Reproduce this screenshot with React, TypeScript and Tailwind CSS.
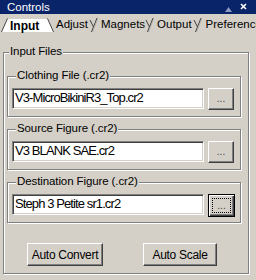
import React from "react";

function GroupBox({
  label,
  labelLeft,
  className,
  children,
}: {
  label: string;
  labelLeft: string;
  className: string;
  children: React.ReactNode;
}) {
  return (
    <div
      className={`relative border border-[#808080] shadow-[inset_1px_1px_0_#fff,1px_1px_0_#fff] ${className}`}
    >
      <span
        className={`absolute -top-[8px] ${labelLeft} bg-[#d4d0c8] px-[1px] text-[11.5px] leading-[13px] tracking-[-0.1px] text-black whitespace-nowrap`}
      >
        {label}
      </span>
      {children}
    </div>
  );
}

function Edit({ value }: { value: string }) {
  return (
    <div className="h-[21px] w-[192px] overflow-hidden whitespace-nowrap border border-t-[#808080] border-l-[#808080] border-b-white border-r-white bg-white pl-[2px] text-[13px] leading-[17px] tracking-[-0.9px] text-black shadow-[inset_1px_1px_0_#404040,inset_-1px_-1px_0_#d4d0c8]">
      {value}
    </div>
  );
}

function BrowseButton({ focused }: { focused?: boolean }) {
  if (focused) {
    return (
      <div className="flex h-[23px] w-[27px] items-center justify-center border border-black bg-[#d4d0c8] shadow-[inset_1px_1px_0_#fff,inset_-1px_-1px_0_#404040,inset_-2px_-2px_0_#808080]">
        <div className="flex h-[15px] w-[19px] items-end justify-center border border-dotted border-black pb-[1px] text-[10px] leading-[10px] text-[#404040]">
          ...
        </div>
      </div>
    );
  }
  return (
    <div className="flex h-[22px] w-[26px] items-end justify-center border border-t-white border-l-white border-b-[#404040] border-r-[#404040] bg-[#d4d0c8] pb-[5px] text-[10px] leading-[10px] text-[#404040] shadow-[inset_-1px_-1px_0_#808080]">
      ...
    </div>
  );
}

function PushButton({ label, width }: { label: string; width: string }) {
  return (
    <div
      className={`flex h-[23px] ${width} items-center justify-center border border-t-white border-l-white border-b-[#404040] border-r-[#404040] bg-[#d4d0c8] text-[12px] tracking-[-0.3px] text-black shadow-[inset_-1px_-1px_0_#808080]`}
    >
      {label}
    </div>
  );
}

function TabSep() {
  return (
    <svg width="9" height="18" viewBox="0 0 9 18" className="shrink-0">
      <path d="M1 6 L4.5 13" stroke="#404040" strokeWidth="1" fill="none" />
      <path d="M2.5 18 L8 4" stroke="#404040" strokeWidth="1" fill="none" />
      <path d="M3.5 18 L9 4" stroke="#a0a0a0" strokeWidth="0.6" fill="none" />
    </svg>
  );
}

export default function App() {
  return (
    <div className="h-[280px] w-[256px] overflow-hidden bg-[#d4d0c8] font-['Liberation_Sans',Arial,sans-serif] text-black">
      {/* Title bar */}
      <div className="flex h-[14px] items-center bg-[#0a246a] pl-[7px] pr-[9px]">
        <span className="text-[11.5px] leading-[13px] text-white">Controls</span>
        <svg width="7" height="5" viewBox="0 0 7 5" className="ml-auto mt-[5px]">
          <path d="M0 5 L3.5 0 L7 5 Z" fill="#8a9ac0" />
        </svg>
        <svg width="7" height="7" viewBox="0 0 7 7" className="ml-[8px] -mt-[1px]">
          <path d="M1 1 L6 6 M6 1 L1 6" stroke="#fff" strokeWidth="1.6" />
        </svg>
      </div>

      {/* Tabs */}
      <div className="flex h-[18px] items-end whitespace-nowrap text-[11.5px] leading-[13px]">
        <div className="relative h-[18px] w-[55px] shrink-0">
          <svg width="56" height="18" viewBox="0 0 56 18" className="absolute left-0 top-0">
            <path d="M1 18 L7 5 L48 5 L54 18 Z" fill="#fff" />
            <path d="M1.5 18 L7.5 4.5" stroke="#404040" fill="none" />
            <path d="M47.5 4.5 L53.5 18" stroke="#404040" fill="none" />
          </svg>
          <span className="absolute left-[10px] top-[6px] text-[12px] font-bold">Input</span>
        </div>
        <span className="ml-[1px] pb-[1px]">Adjust</span>
        <span className="ml-[1px]">
          <TabSep />
        </span>
        <span className="ml-[3px] pb-[1px]">Magnets</span>
        <span className="ml-[0px]">
          <TabSep />
        </span>
        <span className="ml-[3px] pb-[1px]">Output</span>
        <span className="ml-[1px]">
          <TabSep />
        </span>
        <span className="ml-[4px] pb-[1px]">Preferences</span>
      </div>

      {/* Panel */}
      <div className="pl-[3px] pt-[20px]">
        <GroupBox label="Input Files" labelLeft="left-[5px]" className="h-[222px] w-[246px] pl-[3px] pt-[23px]">
          <div className="flex flex-col gap-[12px]">
            <GroupBox label="Clothing File (.cr2)" labelLeft="left-[8px]" className="h-[41px] w-[234px] pl-[4px] pt-[11px]">
              <div className="flex gap-[4px]">
                <Edit value="V3-MicroBikiniR3_Top.cr2" />
                <BrowseButton />
              </div>
            </GroupBox>
            <GroupBox label="Source Figure (.cr2)" labelLeft="left-[8px]" className="h-[41px] w-[234px] pl-[4px] pt-[11px]">
              <div className="flex gap-[4px]">
                <Edit value="V3 BLANK SAE.cr2" />
                <BrowseButton />
              </div>
            </GroupBox>
            <GroupBox label="Destination Figure (.cr2)" labelLeft="left-[8px]" className="h-[41px] w-[234px] pl-[4px] pt-[11px]">
              <div className="flex gap-[4px]">
                <Edit value="Steph 3 Petite sr1.cr2" />
                <BrowseButton focused />
              </div>
            </GroupBox>
          </div>
          <div className="mt-[20px] flex gap-[40px] pl-[20px]">
            <PushButton label="Auto Convert" width="w-[76px]" />
            <PushButton label="Auto Scale" width="w-[74px]" />
          </div>
        </GroupBox>
      </div>
    </div>
  );
}
